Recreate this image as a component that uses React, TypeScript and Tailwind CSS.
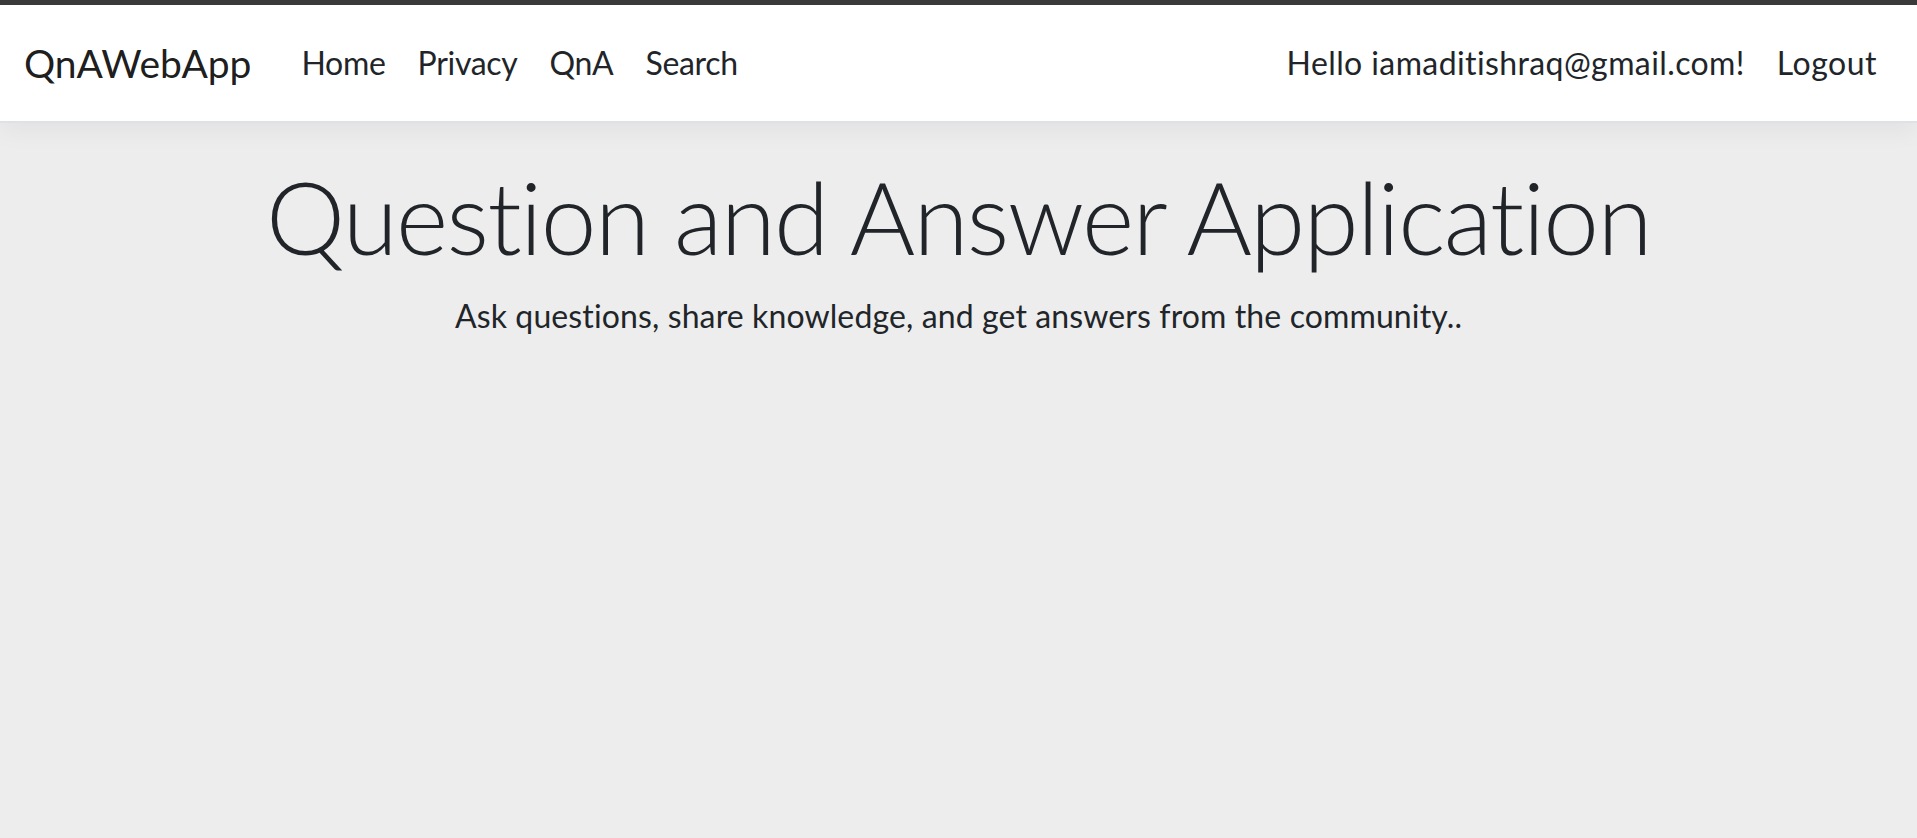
const links = ["Home", "Privacy", "QnA", "Search"];

export default function App() {
  return (
    <div className="min-h-screen bg-[#ededed] font-['Lato',sans-serif] text-[#212529]">
      {/* dark strip at the very top of the window */}
      <div className="h-[5px] bg-[#3b3b3b]" />

      <header className="flex h-[118px] items-center justify-between border-b-2 border-[#dee2e6] bg-white px-6 shadow-[0_8px_24px_rgba(0,0,0,0.05)]">
        <nav className="flex items-center">
          <a className="mr-[34px] text-[39px] leading-[60px] text-black/90">QnAWebApp</a>
          {links.map((l) => (
            <a key={l} className="px-4 text-[32px] leading-[48px] tracking-[-0.3px] text-[#212529]">
              {l}
            </a>
          ))}
        </nav>
        <div className="flex items-center">
          <span className="px-4 text-[32px] leading-[48px] tracking-[0.4px]">Hello iamaditishraq@gmail.com!</span>
          <button className="px-4 text-[32px] leading-[48px] tracking-[0.5px] text-[#212529]">Logout</button>
        </div>
      </header>

      <main className="mt-[33px] text-center">
        <h1 className="mb-4 text-[100px] font-light leading-[1.2] tracking-[-1.6px]">
          Question and Answer Application
        </h1>
        <p className="text-[32px] leading-[48px] tracking-[0.12px]">
          Ask questions, share knowledge, and get answers from the community..
        </p>
      </main>
    </div>
  );
}
